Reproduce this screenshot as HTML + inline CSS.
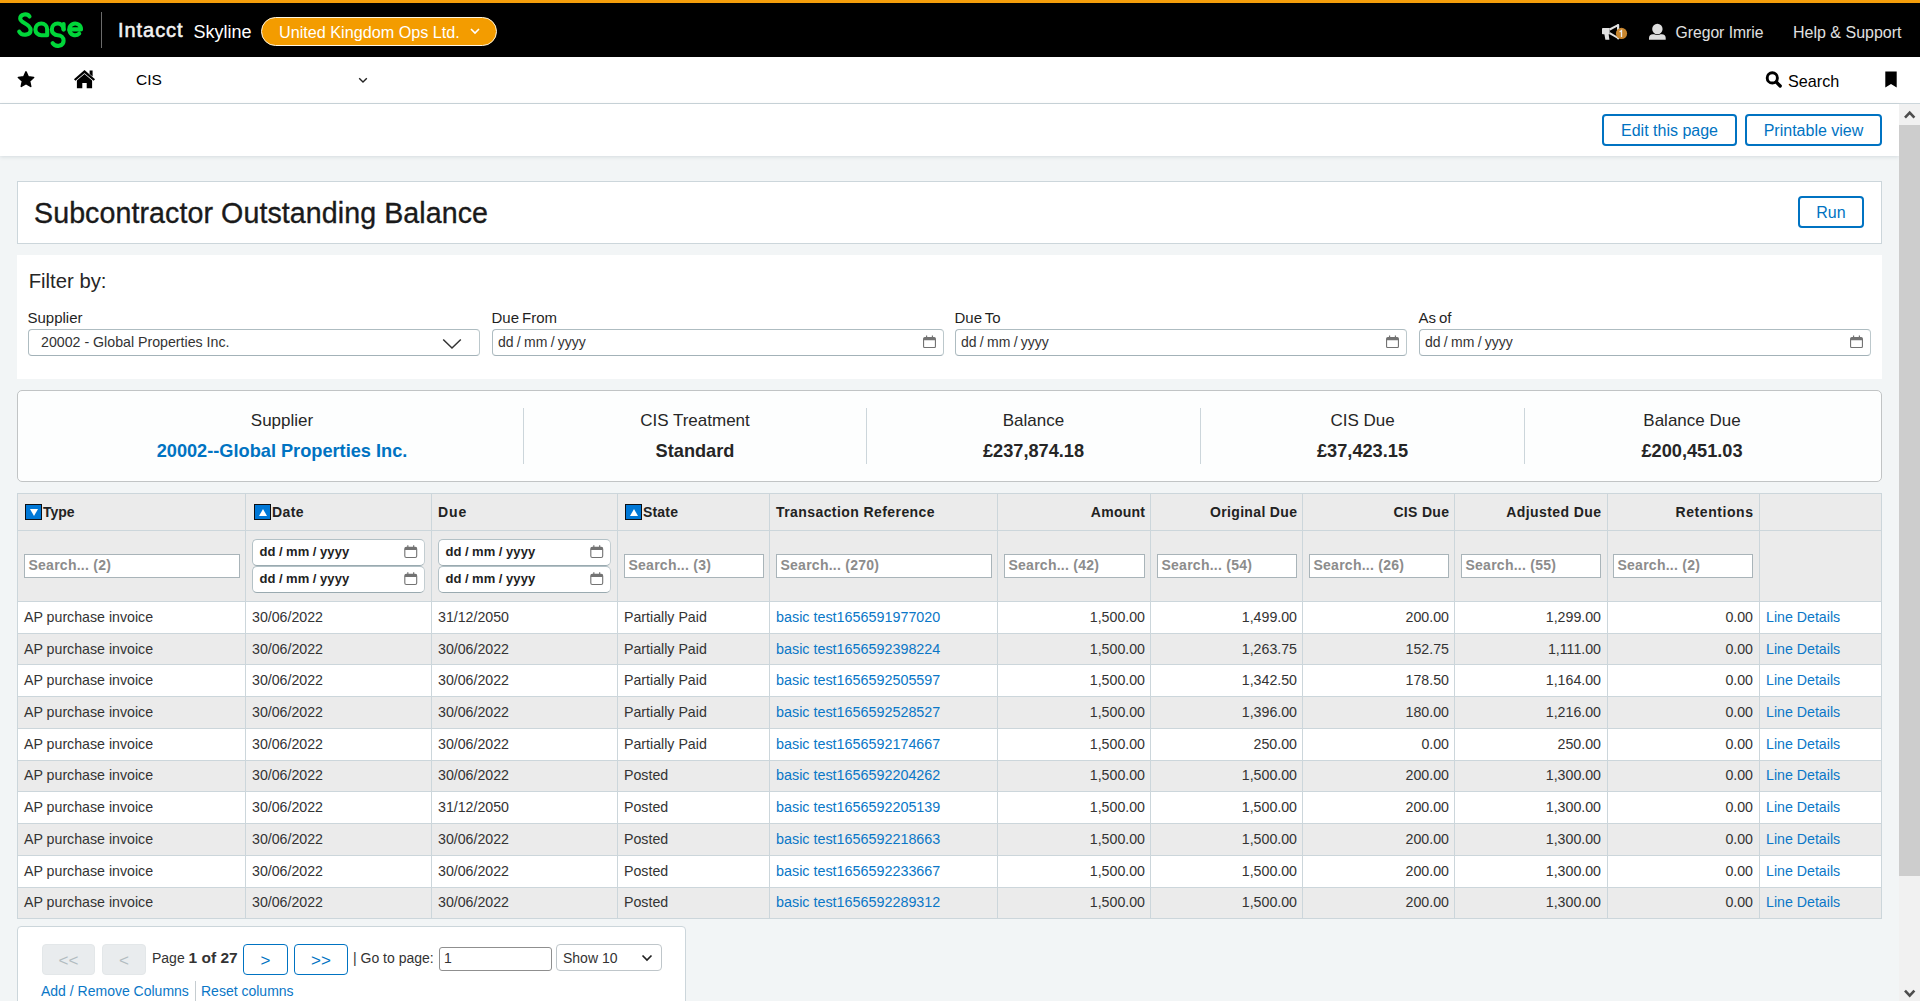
<!DOCTYPE html>
<html lang="en">
<head>
<meta charset="utf-8">
<title>Subcontractor Outstanding Balance</title>
<style>
*{box-sizing:border-box;margin:0;padding:0}
html,body{width:1920px;height:1001px;overflow:hidden;background:#f2f5f6;font-family:"Liberation Sans",sans-serif;color:#333;font-size:14px}
.abs{position:absolute}
a{color:#0a77c7;text-decoration:none}
/* ---------- top bar ---------- */
#top{position:absolute;left:0;top:0;width:1920px;height:57px;background:#000;border-top:3px solid #f59e0b}
#top .sep{position:absolute;left:101px;top:9px;width:1px;height:36px;background:#6b6b6b}
#top .intacct{position:absolute;left:118px;top:15px;font-size:20px;font-weight:normal;color:#f2f2f2;-webkit-text-stroke:.55px #f2f2f2;line-height:24px;letter-spacing:.95px}
#top .skyline{position:absolute;left:193.500px;top:16.500px;font-size:18px;color:#fff;line-height:24px}
#pill{position:absolute;left:261px;top:14px;width:236px;height:29px;border-radius:15px;background:#f39c00;border:1px solid #fff6e0;color:#fff;font-size:16.2px;line-height:28px;padding-left:17px}
#top .rt{position:absolute;top:18px;color:#e0e0e0;font-size:16px;line-height:24px}
/* ---------- nav ---------- */
#nav{position:absolute;left:0;top:57px;width:1920px;height:47px;background:#fff;border-bottom:1px solid #ccd6db}
#nav .cis{position:absolute;left:136px;top:13px;font-size:15.5px;line-height:20px;color:#000}
#nav .search{position:absolute;left:1788px;top:12.500px;font-size:16.2px;line-height:22px;color:#000}
/* ---------- toolbar ---------- */
#tool{position:absolute;left:0;top:104px;width:1899px;height:52px;background:#fff;box-shadow:0 1px 4px rgba(0,40,60,.12)}
.btn{position:absolute;height:32px;border:2px solid #0073c2;border-radius:4px;background:#fff;color:#0073c2;font-size:16px;line-height:30px;text-align:center}
/* ---------- scrollbar ---------- */
#sb{position:absolute;left:1899px;top:104px;width:21px;height:897px;background:#f1f1f1}
#sb .thumb{position:absolute;left:0;top:21px;width:21px;height:751px;background:#cdcdcd}

/* ---------- title card ---------- */
#title{position:absolute;left:17px;top:181px;width:1865px;height:63px;background:#fff;border:1px solid #ccd6db}
#title h1{position:absolute;left:16px;top:13px;font-size:28.6px;font-weight:normal;line-height:36px;color:#1a1a1a;white-space:nowrap;-webkit-text-stroke:.35px #1a1a1a;letter-spacing:.08px}
/* ---------- filter panel ---------- */
#filter{position:absolute;left:17px;top:255px;width:1865px;height:124px;background:#fff}
#filter .fb{position:absolute;left:11.700px;top:13px;font-size:20.3px;line-height:26px;color:#262626}
.fld{position:absolute;top:54px;width:451.5px}
.fld label{display:block;font-size:15px;line-height:18px;color:#1f1f1f;height:20px;word-spacing:-1.2px;margin-left:-.5px}
.fld .box{position:relative;height:27px;border:1px solid #aebcc1;border-right-color:#bcc8cc;border-bottom-color:#a3b2b8;border-radius:4px;background:#fff;font-size:14px;line-height:25px;color:#333;padding-left:5px;white-space:nowrap;word-spacing:-.6px}
.cal{position:absolute;width:13px;height:13.4px}
/* ---------- summary ---------- */
#sum{position:absolute;left:17px;top:390px;width:1865px;height:92px;background:#fdfefe;border:1px solid #c1c4c5;border-radius:5px}
#sum .c{position:absolute;top:17px;height:56px;text-align:center}
#sum .c+.c{border-left:1px solid #ccd6db}
#sum .l{font-size:17px;line-height:24px;color:#262626;margin-top:1px}
#sum .v{font-size:18.2px;font-weight:bold;line-height:24px;color:#262626;margin-top:6px}

/* ---------- grid ---------- */
#grid{position:absolute;left:17px;top:493px;width:1865px;height:426px;background:#fff;border-bottom:1px solid #ccd6db}
.r{position:absolute;left:0;width:1865px;display:flex}
.r>div{position:relative;border-left:1px solid #ccd6db;border-top:1px solid #ccd6db;height:100%;white-space:nowrap;overflow:hidden;flex:none}
.r>div:last-child{border-right:1px solid #ccd6db}
.w0{width:228px}.w1{width:186px}.w2{width:186px}.w3{width:152px}.w4{width:228px}.w5{width:153px}.w6{width:152px}.w7{width:152px}.w8{width:153px}.w9{width:152px}.w10{width:123px}
.hd,.fl{background:#ebebeb}
.hd>div{font-weight:bold;font-size:14px;color:#222;line-height:20px;padding:8px 5px 0 6px}
.hd>div.n{text-align:right}
.si{display:inline-block;vertical-align:top;width:17px;height:16px;margin:2px 1px 0 1px;background:#0078d7;border:1px solid #0c0f14;position:relative}
.si:after{content:"";position:absolute;left:3.5px;top:3.5px;border:4px solid transparent;border-top-width:0;border-bottom:7px solid #fff}
.si.dn:after{border-bottom-width:0;border-top:7px solid #fff;top:4px}
.s{position:absolute;left:6px;top:23px;height:24px;border:1px solid #a9b4b9;background:#fff;font-weight:bold;font-size:14px;letter-spacing:.25px;color:#8c8c8c;line-height:21px;padding-left:3.5px}
.d{position:absolute;left:6px;width:173px;height:27px;border:1px solid #b3c1c6;border-right-color:#c3cdd1;border-bottom-color:#9aaab0;border-radius:5px;background:#fff;font-weight:bold;font-size:13px;letter-spacing:.1px;word-spacing:-.3px;color:#222;line-height:23px;padding-left:6.500px}
.d .cal{left:151px;top:5px;width:13.5px;height:13px}
.dr>div{font-size:14.2px;line-height:20px;padding:var(--p,5px) 5px 0 6px;color:#333}
.dr.e{background:#ebebeb}
.dr>div.n{text-align:right}
.dr>div.w4{font-size:14.35px}
.dr>div.w8,.dr>div.w9{padding-right:6px}
/* ---------- pager ---------- */
#pg{position:absolute;left:17px;top:926px;width:669px;height:90px;background:#fff;border:1px solid #ccd6db;border-radius:4px}
#pg .b{position:absolute;top:17px;height:31px;border-radius:4px;font-size:17px;line-height:32px;text-align:center}
#pg .b.off{background:#e9ecee;color:#b3bcc1;border:1px solid #e3e7e9}
#pg .b.on{background:#fff;color:#0073c2;border:1px solid #0073c2}
#pg .t{position:absolute;top:21px;font-size:14px;line-height:20px;color:#333;white-space:nowrap}
</style>
</head>
<body>

<!-- ================= TOP BLACK BAR ================= -->
<div id="top">
  <svg class="abs" style="left:16px;top:8px" width="68" height="38" viewBox="0 0 68 38">
    <g fill="none" stroke="#00d639" stroke-width="4.1" stroke-linecap="round" stroke-linejoin="round">
      <!-- S -->
      <path d="M13.5 5.5 C11.5 2.2 4.2 2.6 4.2 7.6 C4.2 12.5 14.6 12.2 14.6 19 C14.6 24.6 5.6 25.2 3.2 20.6"/>
      <!-- a -->
      <path d="M31.2 18.4 A5.9 5.9 0 1 0 25.3 24.3 L31.2 24.3 Z"/>
      <!-- g -->
      <path d="M47.6 18.4 A5.9 5.9 0 1 0 41.7 24.3 C45 24.3 47.6 26.6 47.6 29.8 C47.6 35.6 39.4 36.4 36.6 32.2"/>
      <path d="M47.6 18.4 L47.6 13"/>
      <!-- e -->
      <path d="M53.4 18.4 L65 18.4 A5.9 5.9 0 1 0 63.2 22.6"/>
    </g>
  </svg>
  <div class="sep"></div>
  <div class="intacct">Intacct</div>
  <div class="skyline">Skyline</div>
  <div id="pill">United Kingdom Ops Ltd.
    <svg class="abs" style="left:207px;top:9px" width="12" height="8" viewBox="0 0 12 8"><path d="M2 2 L6 6 L10 2" fill="none" stroke="#fff" stroke-width="1.6"/></svg>
  </div>
  <!-- megaphone -->
  <svg class="abs" style="left:1598px;top:17px" width="34" height="24" viewBox="1598 20 34 24">
    <path d="M1602.8 28.100 H1609.700 V34.200 H1602.800 Q1602 34.200 1602 33.400 V28.900 Q1602 28.100 1602.800 28.100 Z" fill="#e2e2e2"/>
    <path d="M1604.300 34 H1608.600 L1609.400 39.800 H1605.400 Z" fill="#e2e2e2"/>
    <path d="M1609.700 29.500 L1618 25.200 V38 L1609.700 33.200 " fill="none" stroke="#e2e2e2" stroke-width="2" stroke-linejoin="round"/>
    <path d="M1618.200 24.900 V38.400" stroke="#e2e2e2" stroke-width="2" stroke-linecap="round"/>
    <circle cx="1621.500" cy="33.450" r="5.600" fill="#c8862e"/>
    <path d="M1619.600 31.900 L1621.500 30.500 V37.100" fill="none" stroke="#ececec" stroke-width="1.300"/>
  </svg>
  <!-- user -->
  <svg class="abs" style="left:1646px;top:17px" width="24" height="24" viewBox="1646 20 24 24">
    <path d="M1649 39.800 V38 Q1649 34.200 1653 34.200 H1661.700 Q1665.700 34.200 1665.700 38 V39.800 Z" fill="#dedede"/>
    <circle cx="1657.400" cy="29" r="6.100" fill="#000"/>
    <circle cx="1657.400" cy="29" r="5.200" fill="#dedede"/>
  </svg>
  <div class="rt" style="left:1675.500px;font-size:15.7px">Gregor Imrie</div>
  <div class="rt" style="left:1793px">Help &amp; Support</div>
</div>

<!-- ================= NAV BAR ================= -->
<div id="nav">
  <svg class="abs" style="left:16px;top:12px" width="20" height="20" viewBox="0 0 20 20"><path d="M10.00 2.90 L12.21 7.86 L17.61 8.43 L13.58 12.06 L14.70 17.37 L10.00 14.66 L5.30 17.37 L6.42 12.06 L2.39 8.43 L7.79 7.86 Z" fill="#000" stroke="#000" stroke-width="1.6" stroke-linejoin="round"/></svg>
  <svg class="abs" style="left:73px;top:13px" width="23" height="20" viewBox="0 0 23 20">
    <path d="M11.5 4 L3.9 10.4 V18.2 H9.3 V13 H13.7 V18.2 H19.1 V10.4 Z" fill="#000"/>
    <path d="M1.7 10 L11.5 1.6 L21.3 10" fill="none" stroke="#000" stroke-width="2.3"/>
    <path d="M16.600 0.600 h3 v6 l-3 -2.600 z" fill="#000"/>
  </svg>
  <div class="cis">CIS</div>
  <svg class="abs" style="left:358px;top:20px" width="10" height="7" viewBox="0 0 10 7"><path d="M1.2 1.3 L5 5 L8.8 1.3" fill="none" stroke="#222" stroke-width="1.4"/></svg>
  <svg class="abs" style="left:1765px;top:13.500px" width="17" height="18" viewBox="0 0 17 18"><circle cx="7.300" cy="6.900" r="5.100" fill="none" stroke="#000" stroke-width="2.900"/><path d="M11.300 11 L15.200 15" stroke="#000" stroke-width="3.300" stroke-linecap="round"/></svg>
  <div class="search">Search</div>
  <svg class="abs" style="left:1885px;top:13.600px" width="12" height="17" viewBox="0 0 12 17"><path d="M.3 .5 h11.4 v16 l-5.7 -3.6 l-5.7 3.6 z" fill="#000"/></svg>
</div>

<!-- ================= TOOLBAR ================= -->
<div id="tool">
  <div class="btn" style="left:1602px;top:10px;width:135px">Edit this page</div>
  <div class="btn" style="left:1745px;top:10px;width:137px">Printable view</div>
</div>

<!-- ================= SCROLLBAR ================= -->
<div id="sb">
  <svg class="abs" style="left:4px;top:5px" width="13" height="11" viewBox="0 0 13 11"><path d="M2 8.6 L6.7 3.6 L11.4 8.6" fill="none" stroke="#4d4d4d" stroke-width="2.6"/></svg>
  <div class="thumb"></div>
  <svg class="abs" style="left:4px;top:884px" width="13" height="11" viewBox="0 0 13 11"><path d="M2 2.6 L6.7 7.6 L11.4 2.6" fill="none" stroke="#4d4d4d" stroke-width="2.6"/></svg>
</div>


<!-- ================= TITLE ================= -->
<div id="title">
  <h1>Subcontractor Outstanding Balance</h1>
  <div class="btn" style="left:1780px;top:14px;width:66px">Run</div>
</div>

<!-- ================= FILTER ================= -->
<div id="filter">
  <div class="fb">Filter by:</div>
  <div class="fld" style="left:11px"><label>Supplier</label>
    <div class="box" style="padding-left:12px;font-size:14.2px;word-spacing:0">20002 - Global Properties Inc.
      <svg class="abs" style="left:413px;top:8px" width="20" height="12" viewBox="0 0 20 12"><path d="M1.2 1.5 L10 10 L18.800 1.500" fill="none" stroke="#333" stroke-width="1.5"/></svg>
    </div>
  </div>
  <div class="fld" style="left:475px"><label>Due From</label>
    <div class="box">dd / mm / yyyy<svg class="cal" style="left:430px;top:5px" viewBox="0 0 14 14"><rect x="0.600" y="2.600" width="12.800" height="10.800" rx="1.600" fill="none" stroke="#737373" stroke-width="1.200"/><path d="M0.600 4 a1.500 1.500 0 0 1 1.500 -1.500 h9.800 a1.500 1.500 0 0 1 1.500 1.500 v1.500 h-12.800 z M3.200 0.200 h1.300 v2.600 h-1.300 z M9.500 0.200 h1.300 v2.600 h-1.300 z" fill="#737373"/></svg></div>
  </div>
  <div class="fld" style="left:938px"><label>Due To</label>
    <div class="box">dd / mm / yyyy<svg class="cal" style="left:430px;top:5px" viewBox="0 0 14 14"><rect x="0.600" y="2.600" width="12.800" height="10.800" rx="1.600" fill="none" stroke="#737373" stroke-width="1.200"/><path d="M0.600 4 a1.500 1.500 0 0 1 1.500 -1.500 h9.800 a1.500 1.500 0 0 1 1.500 1.500 v1.500 h-12.800 z M3.200 0.200 h1.300 v2.600 h-1.300 z M9.500 0.200 h1.300 v2.600 h-1.300 z" fill="#737373"/></svg></div>
  </div>
  <div class="fld" style="left:1402px"><label>As of</label>
    <div class="box">dd / mm / yyyy<svg class="cal" style="left:430px;top:5px" viewBox="0 0 14 14"><rect x="0.600" y="2.600" width="12.800" height="10.800" rx="1.600" fill="none" stroke="#737373" stroke-width="1.200"/><path d="M0.600 4 a1.500 1.500 0 0 1 1.500 -1.500 h9.800 a1.500 1.500 0 0 1 1.500 1.500 v1.500 h-12.800 z M3.200 0.200 h1.300 v2.600 h-1.300 z M9.500 0.200 h1.300 v2.600 h-1.300 z" fill="#737373"/></svg></div>
  </div>
</div>

<!-- ================= SUMMARY ================= -->
<div id="sum">
  <div class="c" style="left:22px;width:484px"><div class="l">Supplier</div><div class="v"><a style="color:#0073c2">20002--Global Properties Inc.</a></div></div>
  <div class="c" style="left:505px;width:343px"><div class="l">CIS Treatment</div><div class="v">Standard</div></div>
  <div class="c" style="left:848px;width:334px"><div class="l">Balance</div><div class="v">&pound;237,874.18</div></div>
  <div class="c" style="left:1182px;width:324px"><div class="l">CIS Due</div><div class="v">&pound;37,423.15</div></div>
  <div class="c" style="left:1506px;width:335px"><div class="l">Balance Due</div><div class="v">&pound;200,451.03</div></div>
</div>

<!-- ================= GRID ================= -->
<div id="grid">
<div class="r hd" style="top:0;height:37px"><div class="w0"><i class="si dn"></i><span style="letter-spacing:-0.05px;margin-right:0.05px">Type</span></div><div class="w1"><i class="si" style="margin-left:2px"></i><span style="letter-spacing:0.41px;margin-right:-0.41px">Date</span></div><div class="w2"><span style="letter-spacing:0.9px;margin-right:-0.9px">Due</span></div><div class="w3"><i class="si"></i><span style="letter-spacing:0.18px;margin-right:-0.18px">State</span></div><div class="w4"><span style="letter-spacing:0.42px;margin-right:-0.42px">Transaction Reference</span></div><div class="w5 n"><span style="letter-spacing:0.26px;margin-right:-0.26px">Amount</span></div><div class="w6 n"><span style="letter-spacing:0.34px;margin-right:-0.34px">Original Due</span></div><div class="w7 n"><span style="letter-spacing:0.32px;margin-right:-0.32px">CIS Due</span></div><div class="w8 n" style="padding-right:6px"><span style="letter-spacing:0.41px;margin-right:-0.41px">Adjusted Due</span></div><div class="w9 n" style="padding-right:6px"><span style="letter-spacing:0.57px;margin-right:-0.57px">Retentions</span></div><div class="w10"></div></div>
<div class="r fl" style="top:37px;height:71px"><div class="w0"><div class="s" style="width:216px">Search... (2)</div></div><div class="w1"><div class="d" style="top:8px">dd / mm / yyyy<svg class="cal" viewBox="0 0 14 14"><rect x="0.600" y="2.600" width="12.800" height="10.800" rx="1.600" fill="none" stroke="#737373" stroke-width="1.200"/><path d="M0.600 4 a1.500 1.500 0 0 1 1.500 -1.500 h9.800 a1.500 1.500 0 0 1 1.500 1.500 v1.500 h-12.800 z M3.200 0.200 h1.300 v2.600 h-1.300 z M9.500 0.200 h1.300 v2.600 h-1.300 z" fill="#737373"/></svg></div><div class="d" style="top:35px">dd / mm / yyyy<svg class="cal" viewBox="0 0 14 14"><rect x="0.600" y="2.600" width="12.800" height="10.800" rx="1.600" fill="none" stroke="#737373" stroke-width="1.200"/><path d="M0.600 4 a1.500 1.500 0 0 1 1.500 -1.500 h9.800 a1.500 1.500 0 0 1 1.500 1.500 v1.500 h-12.800 z M3.200 0.200 h1.300 v2.600 h-1.300 z M9.500 0.200 h1.300 v2.600 h-1.300 z" fill="#737373"/></svg></div></div><div class="w2"><div class="d" style="top:8px">dd / mm / yyyy<svg class="cal" viewBox="0 0 14 14"><rect x="0.600" y="2.600" width="12.800" height="10.800" rx="1.600" fill="none" stroke="#737373" stroke-width="1.200"/><path d="M0.600 4 a1.500 1.500 0 0 1 1.500 -1.500 h9.800 a1.500 1.500 0 0 1 1.500 1.500 v1.500 h-12.800 z M3.200 0.200 h1.300 v2.600 h-1.300 z M9.500 0.200 h1.300 v2.600 h-1.300 z" fill="#737373"/></svg></div><div class="d" style="top:35px">dd / mm / yyyy<svg class="cal" viewBox="0 0 14 14"><rect x="0.600" y="2.600" width="12.800" height="10.800" rx="1.600" fill="none" stroke="#737373" stroke-width="1.200"/><path d="M0.600 4 a1.500 1.500 0 0 1 1.500 -1.500 h9.800 a1.500 1.500 0 0 1 1.500 1.500 v1.500 h-12.800 z M3.200 0.200 h1.300 v2.600 h-1.300 z M9.500 0.200 h1.300 v2.600 h-1.300 z" fill="#737373"/></svg></div></div><div class="w3"><div class="s" style="width:140px">Search... (3)</div></div><div class="w4"><div class="s" style="width:216px">Search... (270)</div></div><div class="w5"><div class="s" style="width:141px">Search... (42)</div></div><div class="w6"><div class="s" style="width:140px">Search... (54)</div></div><div class="w7"><div class="s" style="width:140px">Search... (26)</div></div><div class="w8"><div class="s" style="width:140px">Search... (55)</div></div><div class="w9"><div class="s" style="width:140px;left:5px">Search... (2)</div></div><div class="w10"></div></div>
<div class="r dr" style="top:108px;height:32px"><div class="w0">AP purchase invoice</div><div class="w1">30/06/2022</div><div class="w2">31/12/2050</div><div class="w3">Partially Paid</div><div class="w4"><a>basic test1656591977020</a></div><div class="w5 n">1,500.00</div><div class="w6 n">1,499.00</div><div class="w7 n">200.00</div><div class="w8 n">1,299.00</div><div class="w9 n">0.00</div><div class="w10"><a>Line Details</a></div></div>
<div class="r dr e" style="top:140px;height:31px"><div class="w0">AP purchase invoice</div><div class="w1">30/06/2022</div><div class="w2">30/06/2022</div><div class="w3">Partially Paid</div><div class="w4"><a>basic test1656592398224</a></div><div class="w5 n">1,500.00</div><div class="w6 n">1,263.75</div><div class="w7 n">152.75</div><div class="w8 n">1,111.00</div><div class="w9 n">0.00</div><div class="w10"><a>Line Details</a></div></div>
<div class="r dr" style="top:171px;height:32px"><div class="w0">AP purchase invoice</div><div class="w1">30/06/2022</div><div class="w2">30/06/2022</div><div class="w3">Partially Paid</div><div class="w4"><a>basic test1656592505597</a></div><div class="w5 n">1,500.00</div><div class="w6 n">1,342.50</div><div class="w7 n">178.50</div><div class="w8 n">1,164.00</div><div class="w9 n">0.00</div><div class="w10"><a>Line Details</a></div></div>
<div class="r dr e" style="top:203px;height:32px"><div class="w0">AP purchase invoice</div><div class="w1">30/06/2022</div><div class="w2">30/06/2022</div><div class="w3">Partially Paid</div><div class="w4"><a>basic test1656592528527</a></div><div class="w5 n">1,500.00</div><div class="w6 n">1,396.00</div><div class="w7 n">180.00</div><div class="w8 n">1,216.00</div><div class="w9 n">0.00</div><div class="w10"><a>Line Details</a></div></div>
<div class="r dr" style="top:235px;height:32px"><div class="w0">AP purchase invoice</div><div class="w1">30/06/2022</div><div class="w2">30/06/2022</div><div class="w3">Partially Paid</div><div class="w4"><a>basic test1656592174667</a></div><div class="w5 n">1,500.00</div><div class="w6 n">250.00</div><div class="w7 n">0.00</div><div class="w8 n">250.00</div><div class="w9 n">0.00</div><div class="w10"><a>Line Details</a></div></div>
<div class="r dr e" style="top:267px;height:31px;--p:4px"><div class="w0">AP purchase invoice</div><div class="w1">30/06/2022</div><div class="w2">30/06/2022</div><div class="w3">Posted</div><div class="w4"><a>basic test1656592204262</a></div><div class="w5 n">1,500.00</div><div class="w6 n">1,500.00</div><div class="w7 n">200.00</div><div class="w8 n">1,300.00</div><div class="w9 n">0.00</div><div class="w10"><a>Line Details</a></div></div>
<div class="r dr" style="top:298px;height:32px"><div class="w0">AP purchase invoice</div><div class="w1">30/06/2022</div><div class="w2">31/12/2050</div><div class="w3">Posted</div><div class="w4"><a>basic test1656592205139</a></div><div class="w5 n">1,500.00</div><div class="w6 n">1,500.00</div><div class="w7 n">200.00</div><div class="w8 n">1,300.00</div><div class="w9 n">0.00</div><div class="w10"><a>Line Details</a></div></div>
<div class="r dr e" style="top:330px;height:32px"><div class="w0">AP purchase invoice</div><div class="w1">30/06/2022</div><div class="w2">30/06/2022</div><div class="w3">Posted</div><div class="w4"><a>basic test1656592218663</a></div><div class="w5 n">1,500.00</div><div class="w6 n">1,500.00</div><div class="w7 n">200.00</div><div class="w8 n">1,300.00</div><div class="w9 n">0.00</div><div class="w10"><a>Line Details</a></div></div>
<div class="r dr" style="top:362px;height:32px"><div class="w0">AP purchase invoice</div><div class="w1">30/06/2022</div><div class="w2">30/06/2022</div><div class="w3">Posted</div><div class="w4"><a>basic test1656592233667</a></div><div class="w5 n">1,500.00</div><div class="w6 n">1,500.00</div><div class="w7 n">200.00</div><div class="w8 n">1,300.00</div><div class="w9 n">0.00</div><div class="w10"><a>Line Details</a></div></div>
<div class="r dr e" style="top:394px;height:31px;--p:4px"><div class="w0">AP purchase invoice</div><div class="w1">30/06/2022</div><div class="w2">30/06/2022</div><div class="w3">Posted</div><div class="w4"><a>basic test1656592289312</a></div><div class="w5 n">1,500.00</div><div class="w6 n">1,500.00</div><div class="w7 n">200.00</div><div class="w8 n">1,300.00</div><div class="w9 n">0.00</div><div class="w10"><a>Line Details</a></div></div>
</div>

<!-- ================= PAGER ================= -->
<div id="pg">
  <div class="b off" style="left:24px;width:53px">&lt;&lt;</div>
  <div class="b off" style="left:84px;width:44px">&lt;</div>
  <div class="t" style="left:134px">Page <b style="font-size:15.5px">1 of 27</b></div>
  <div class="b on" style="left:225px;width:45px">&gt;</div>
  <div class="b on" style="left:276px;width:54px">&gt;&gt;</div>
  <div class="t" style="left:335px">| Go to page:</div>
  <div class="abs" style="left:421px;top:20px;width:113px;height:24px;border:1px solid #8f8f8f;border-radius:3px;font-size:14px;line-height:20px;padding-left:4px;color:#333">1</div>
  <div class="abs" style="left:538px;top:17px;width:106px;height:27px;border:1px solid #bfc6ca;border-radius:4px;font-size:14px;line-height:26px;padding-left:6px;color:#333">Show 10
    <svg class="abs" style="left:84px;top:9px" width="12" height="8" viewBox="0 0 12 8"><path d="M1.5 1.5 L6 6 L10.500 1.500" fill="none" stroke="#222" stroke-width="1.7"/></svg>
  </div>
  <div class="t" style="left:23px;top:54px"><a>Add / Remove Columns</a></div>
  <div class="abs" style="left:176.500px;top:54px;width:1px;height:22px;background:#c5ccd0"></div>
  <div class="t" style="left:183px;top:54px"><a>Reset columns</a></div>
</div>



</body>
</html>
